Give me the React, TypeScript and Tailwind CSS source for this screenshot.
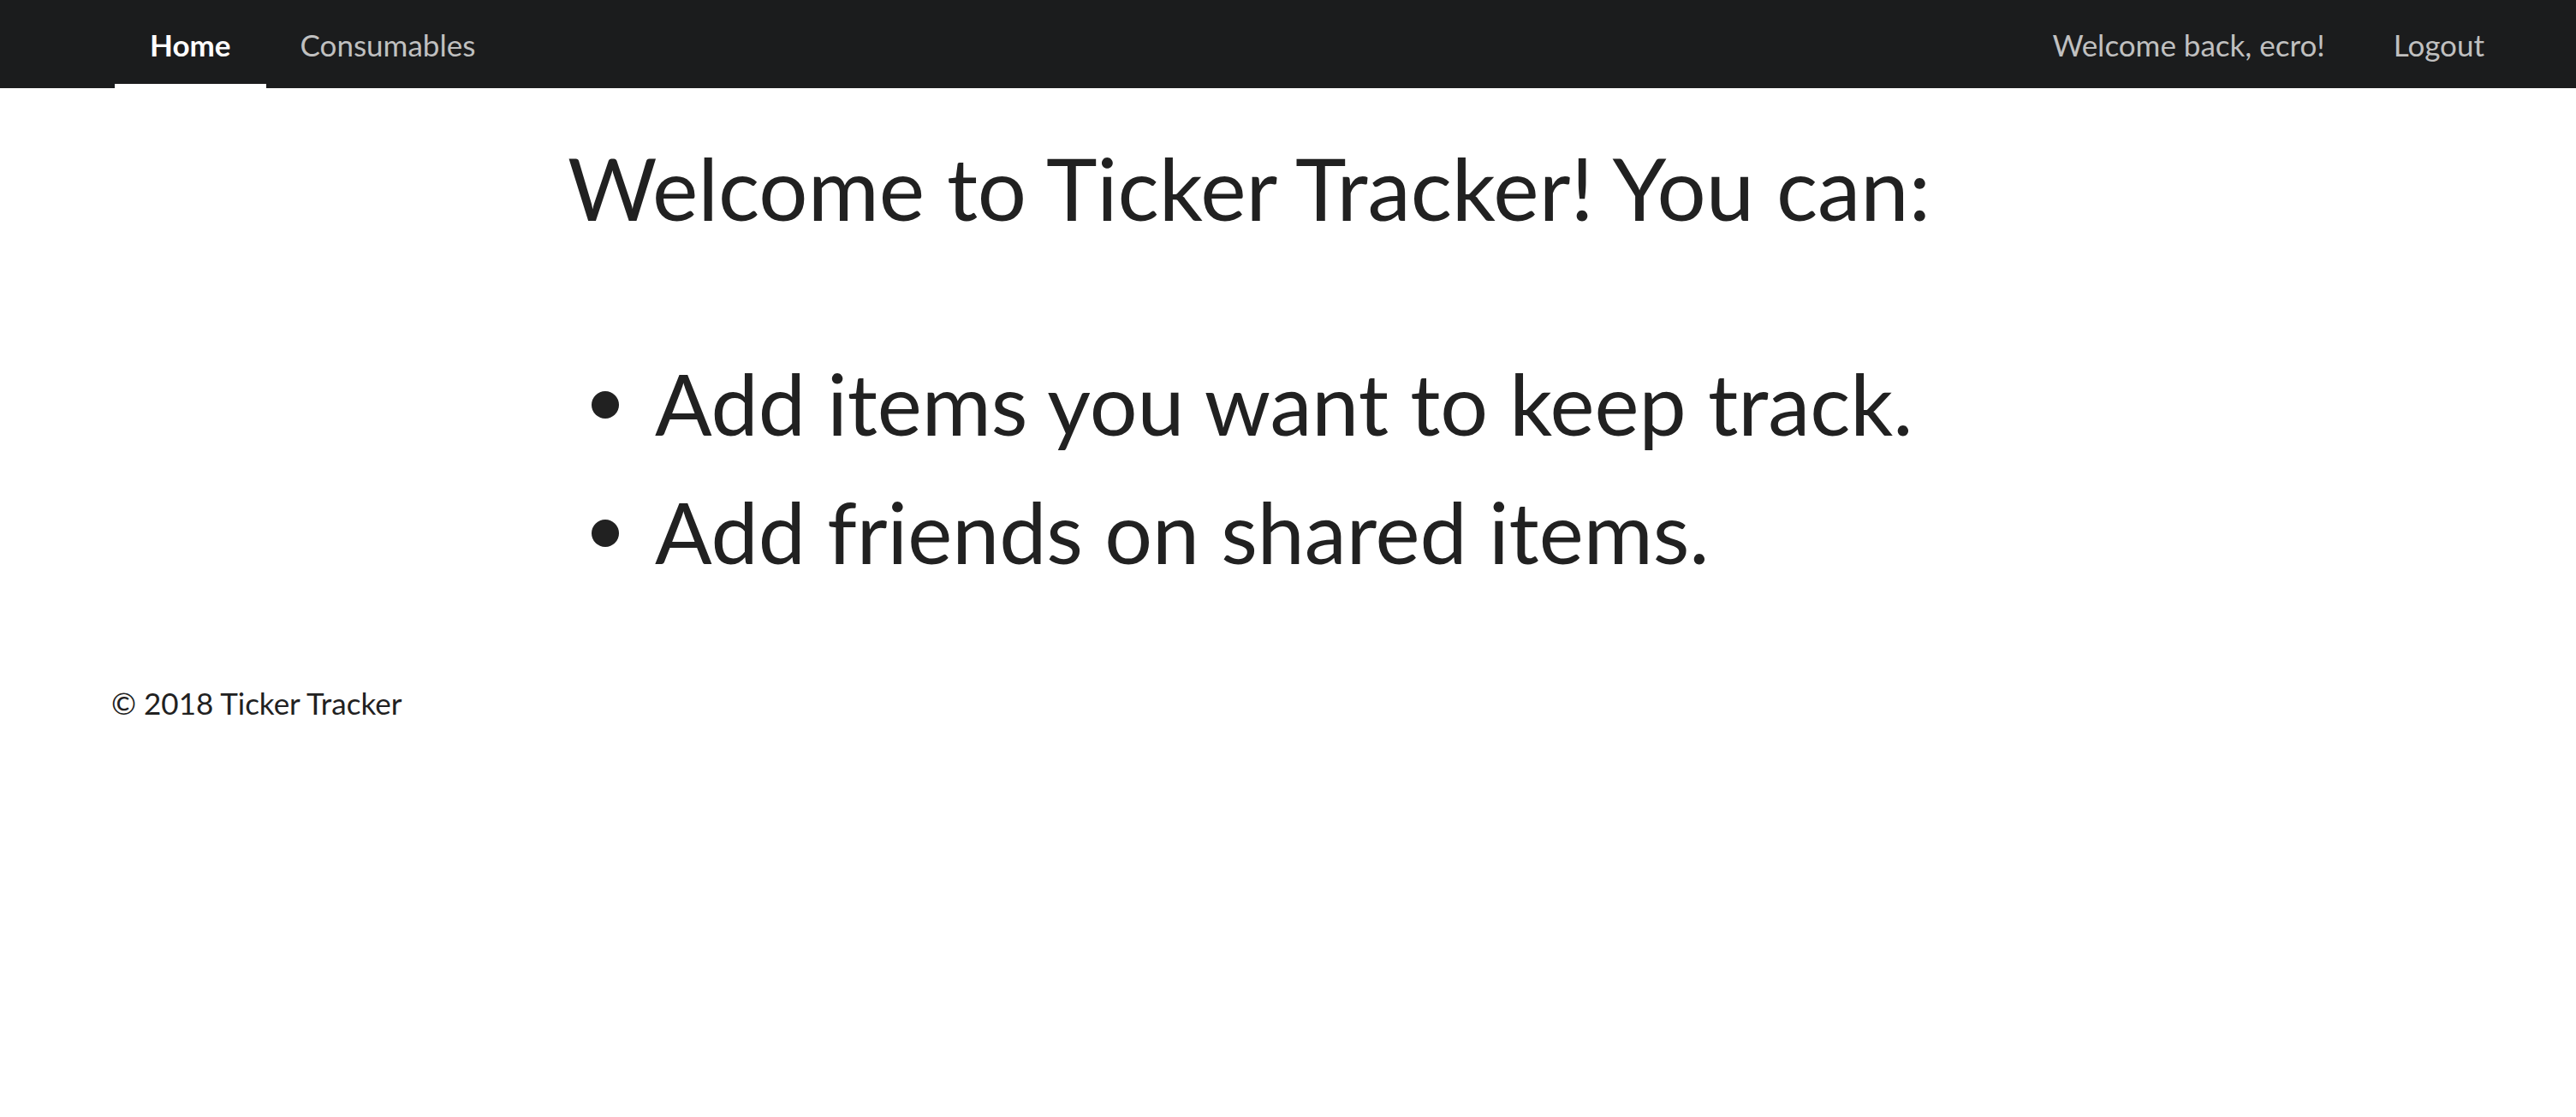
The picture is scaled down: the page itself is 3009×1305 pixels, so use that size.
import React from "react";

export default function App() {
  const font = { fontFamily: "Lato, 'Open Sans', sans-serif" };
  return (
    <div className="min-h-[1305px] w-full bg-white" style={font}>
      <nav className="flex h-[103px] w-full items-stretch bg-[#1b1c1d] pl-[134px] pr-[65px] text-[35px] leading-[1.2]">
        <a className="flex items-center border-b-[5px] border-white px-[41px] pt-[5px] font-bold text-white">
          Home
        </a>
        <a className="flex items-center px-[40px] pt-[1px] text-[#c0c0c0]">Consumables</a>
        <div className="flex-1" />
        <span className="flex items-center pl-[42px] pr-[40px] pt-[1px] text-[#c0c0c0]">Welcome back, ecro!</span>
        <a className="flex items-center pl-[40px] pr-[42px] pt-[1px] text-[#c0c0c0]">Logout</a>
      </nav>

      <main className="pl-[663px] text-[#212121]">
        <h1 className="mt-[56px] text-[101px] font-normal leading-[1.2]">
          Welcome to Ticker Tracker! You can:
        </h1>
        <ul className="mt-[116px] pl-[28px] text-[98.5px] leading-[150px]">
          <li className="flex items-center">
            <span className="mr-[42px] mt-[4px] h-[32px] w-[32px] shrink-0 rounded-full bg-[#212121]" />
            <span>Add items you want to keep track.</span>
          </li>
          <li className="flex items-center">
            <span className="mr-[42px] mt-[4px] h-[32px] w-[32px] shrink-0 rounded-full bg-[#212121]" />
            <span>Add friends on shared items.</span>
          </li>
        </ul>
      </main>

      <footer className="mt-[104px] pl-[130px] text-[35px] leading-[1.2] text-[#212121]">
        © 2018 Ticker Tracker
      </footer>
    </div>
  );
}
